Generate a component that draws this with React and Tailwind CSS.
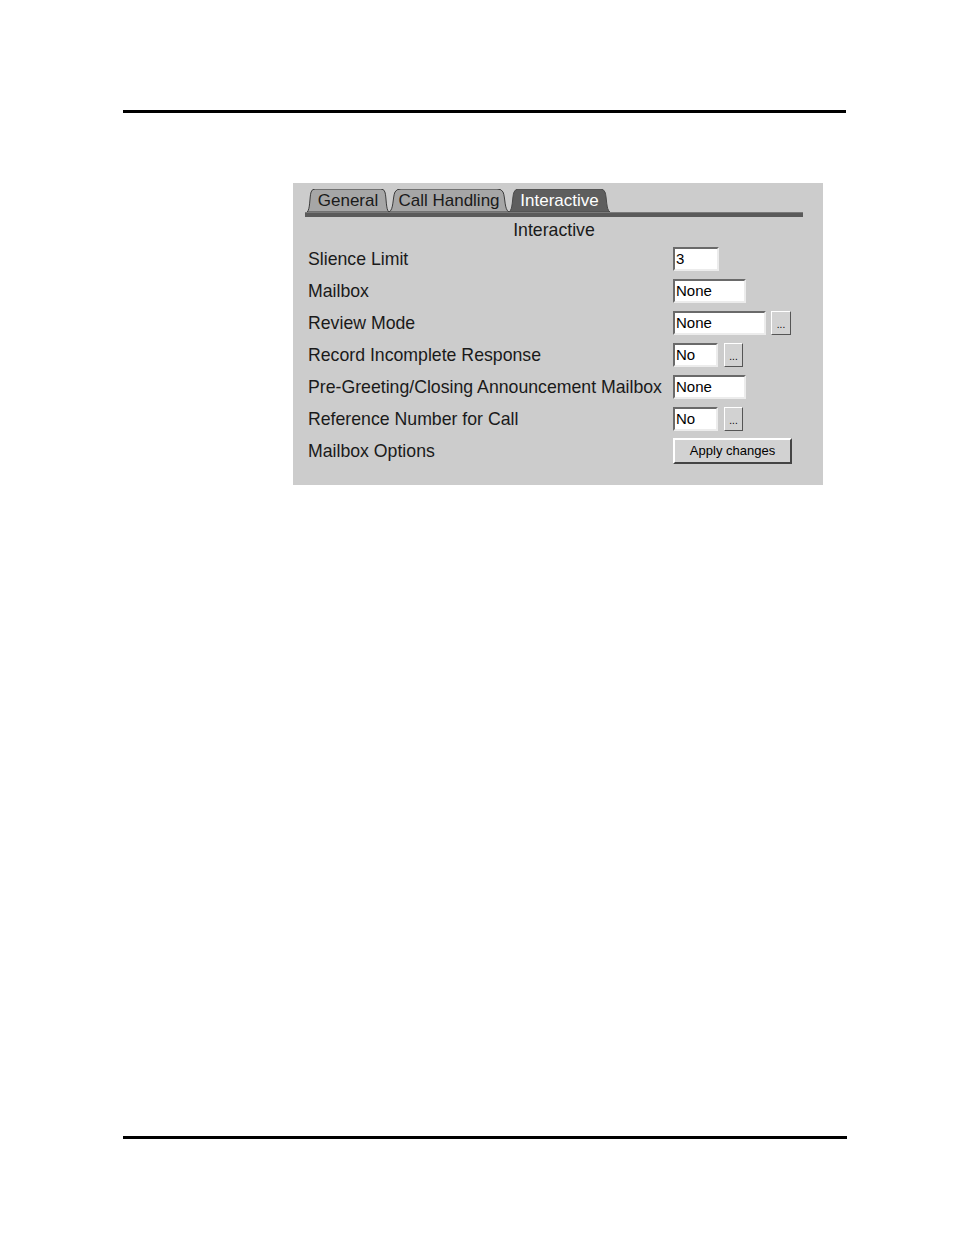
const FONT = { fontFamily: '"Liberation Sans", Arial, sans-serif' };

const TabShape = ({ active }) => (
    <svg className="absolute inset-0 h-full w-full" viewBox="0 0 100 23" preserveAspectRatio="none">
        <path
            d="M0 23 C4 21 3 8 5 3 Q6 0 10 0 L90 0 Q94 0 95 3 C97 8 96 21 100 23 Z"
            fill={active ? '#5e5e5e' : '#a6a6a6'}
            stroke={active ? '#4a4a4a' : '#3c3c3c'}
            strokeWidth="1"
            vectorEffect="non-scaling-stroke"
        />
    </svg>
);

const Tab = ({ label, width, active }) => (
    <div className={`relative h-[23px] flex items-center justify-center ${width}`}>
        <TabShape active={active} />
        <span className={`relative text-[17px] leading-none ${active ? 'text-white' : 'text-[#1a1a1a]'}`}>{label}</span>
    </div>
);

const Field = ({ value, width }) => (
    <div className={`h-[24px] ${width} bg-white border-2 border-t-[#6a6a6a] border-l-[#6a6a6a] border-b-[#ececec] border-r-[#ececec] flex items-center pl-[1px] text-[15px] text-black`}>
        {value}
    </div>
);

const DotsButton = ({ width }) => (
    <div className={`h-[24px] ${width} bg-[#d2d2d2] border border-t-white border-l-white border-b-[#555] border-r-[#555] flex items-end justify-center pb-[4px] text-[10px] leading-none text-black`}>
        ...
    </div>
);

const rows = [
    { label: 'Slience Limit', control: <Field value="3" width="w-[46px]" /> },
    { label: 'Mailbox', control: <Field value="None" width="w-[73px]" /> },
    {
        label: 'Review Mode',
        control: (
            <div className="flex gap-[5px]">
                <Field value="None" width="w-[93px]" />
                <DotsButton width="w-[20px]" />
            </div>
        ),
    },
    {
        label: 'Record Incomplete Response',
        control: (
            <div className="flex gap-[6px]">
                <Field value="No" width="w-[45px]" />
                <DotsButton width="w-[19px]" />
            </div>
        ),
    },
    { label: 'Pre-Greeting/Closing Announcement Mailbox', control: <Field value="None" width="w-[73px]" /> },
    {
        label: 'Reference Number for Call',
        control: (
            <div className="flex gap-[6px]">
                <Field value="No" width="w-[45px]" />
                <DotsButton width="w-[19px]" />
            </div>
        ),
    },
    {
        label: 'Mailbox Options',
        control: (
            <div className="h-[26px] w-[119px] bg-[#d2d2d2] border-2 border-t-white border-l-white border-b-[#444] border-r-[#444] flex items-center justify-center text-[13px] text-black">
                Apply changes
            </div>
        ),
    },
];

export default function App() {
    return (
        <div className="w-[954px] min-h-[1235px] bg-white flex flex-col" style={FONT}>
            <div className="mt-[110px] ml-[123px] w-[723px] h-[3px] bg-black" />

            {/* panel */}
            <div className="mt-[70px] ml-[293px] w-[530px] h-[302px] bg-[#cccccc] flex flex-col">
                <div className="h-[29px] pt-[6px] pl-[14px] flex">
                    <Tab label="General" width="w-[82px]" />
                    <Tab label="Call Handling" width="w-[120px]" />
                    <Tab label="Interactive" width="w-[101px]" active />
                </div>
                <div className="ml-[12px] w-[498px] h-[5px] bg-[#5a5a5a] border-t border-t-[#7a7a7a]" />
                <div className="h-[26px] flex items-center justify-center pr-[8px] text-[17.7px] text-[#1a1a1a]">
                    Interactive
                </div>
                {rows.map((row) => (
                    <div key={row.label} className="h-[32px] flex items-center">
                        <div className="w-[380px] pl-[15px] text-[17.7px] text-[#1a1a1a] whitespace-nowrap">{row.label}</div>
                        {row.control}
                    </div>
                ))}
            </div>

            <div className="mt-[651px] ml-[123px] w-[724px] h-[3px] bg-black" />
        </div>
    );
}
